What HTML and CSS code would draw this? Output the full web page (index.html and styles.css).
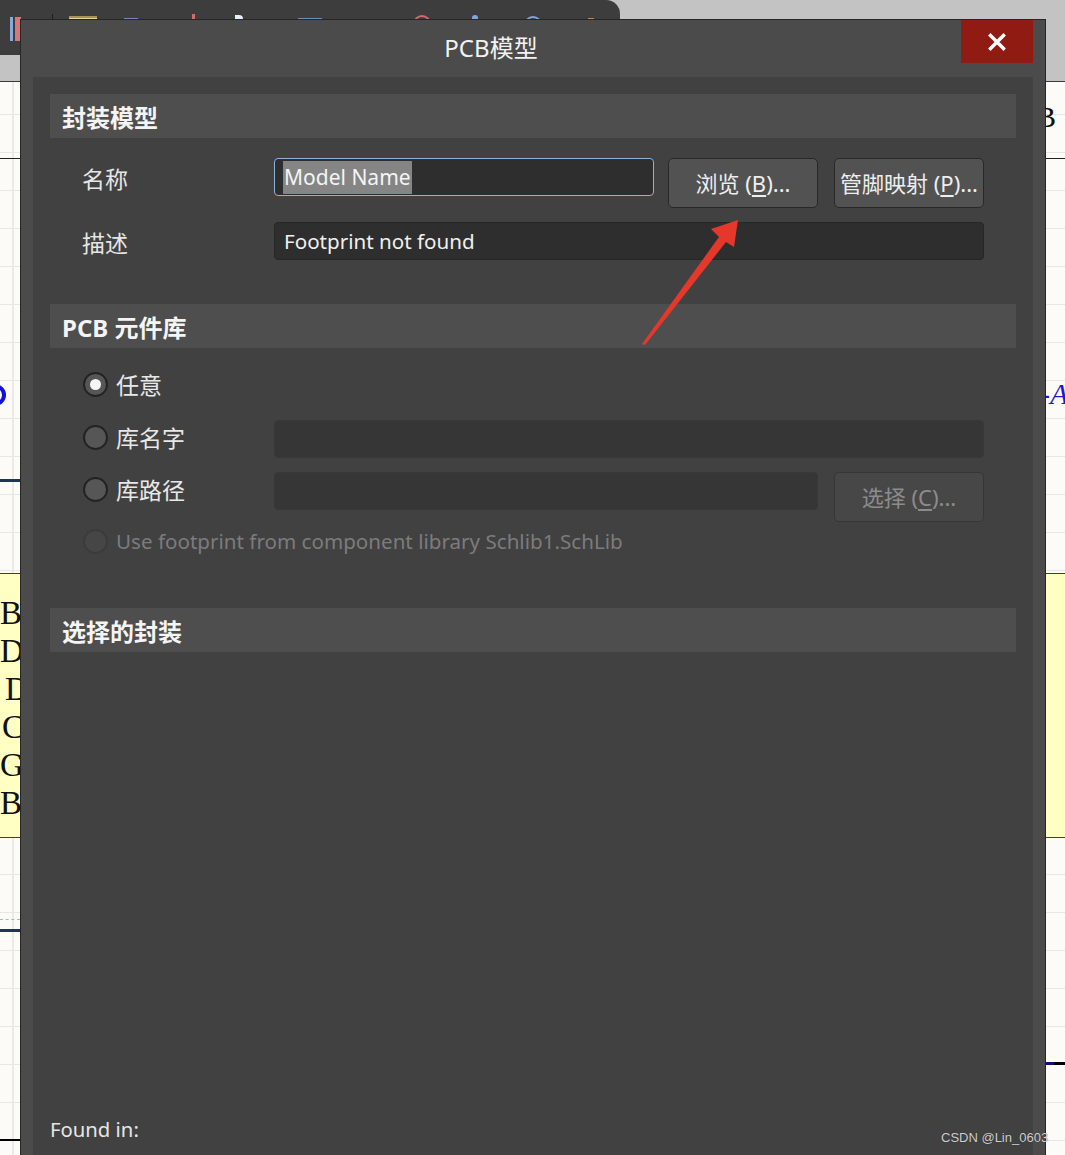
FILE: index.html
```html
<!DOCTYPE html>
<html lang="zh-CN">
<head>
  <meta charset="UTF-8">
  <title>PCB模型</title>
  <link rel="stylesheet" href="styles.css">
</head>
<body>
  <div class="desktop">
    <div class="topband">
      <div class="toolbar">
        <span class="tb-icon tb-layers"></span>
        <span class="tb-sep"></span>
        <span class="tb-icon tb-folder"></span>
        <span class="tb-icon tb-bar"></span>
        <span class="tb-icon tb-pin"></span>
        <span class="tb-icon tb-doc"></span>
        <span class="tb-icon tb-wide"></span>
        <span class="tb-icon tb-arc"></span>
        <span class="tb-icon tb-tri"></span>
        <span class="tb-icon tb-arc-blue"></span>
        <span class="tb-icon tb-dot"></span>
      </div>
    </div>

    <!-- schematic fragments visible around the dialog -->
    <div class="sch sch-line-top"></div>
    <div class="sch sch-ring"></div>
    <div class="sch sch-bus"></div>
    <div class="sch sch-glyph">B</div>
    <div class="sch sch-net">-A</div>
    <div class="sch sch-part">
      <div class="pin-names">
        <span>B</span>
        <span>D</span>
        <span class="indent">D</span>
        <span class="indent-s">C</span>
        <span>G</span>
        <span>B</span>
      </div>
    </div>
    <div class="sch sch-dots"></div>
    <div class="sch sch-wire"></div>
    <div class="sch sch-wire-r"></div>
    <div class="sch sch-wire-low"></div>

    <div class="dialog">
      <div class="titlebar">
        <div class="title">PCB模型</div>
        <button class="close" aria-label="关闭">
          <svg width="18" height="18" viewBox="0 0 18 18"><path d="M2.5 2.5 L15.5 15.5 M15.5 2.5 L2.5 15.5" stroke="#fff" stroke-width="3.4" stroke-linecap="square"/></svg>
        </button>
      </div>

      <div class="panel">
        <div class="section-head">封装模型</div>
        <div class="fields">
          <div class="row">
            <div class="label">名称</div>
            <div class="input focused name-input"><span class="sel">Model Name</span></div>
            <button class="btn">浏览 (<u>B</u>)...</button>
            <button class="btn">管脚映射 (<u>P</u>)...</button>
          </div>
          <div class="row gap-desc">
            <div class="label">描述</div>
            <div class="input wide">Footprint not found</div>
          </div>
        </div>

        <div class="section-head">PCB 元件库</div>
        <div class="fields radios">
          <div class="row">
            <label class="radio-label first"><span class="radio checked"></span>任意</label>
          </div>
          <div class="row gap-lib">
            <label class="radio-label"><span class="radio"></span>库名字</label>
            <div class="input wide disabled"></div>
          </div>
          <div class="row gap-path">
            <label class="radio-label"><span class="radio"></span>库路径</label>
            <div class="input path-input disabled"></div>
            <button class="btn disabled">选择 (<u>C</u>)...</button>
          </div>
          <div class="row">
            <label class="radio-label off"><span class="radio disabled"></span>Use footprint from component library Schlib1.SchLib</label>
          </div>
        </div>

        <div class="section-head">选择的封装</div>
        <div class="preview"></div>
        <div class="found">Found in:</div>
      </div>
    </div>

    <svg class="annot" width="1065" height="1155" viewBox="0 0 1065 1155">
      <polygon points="642,344 719,237 711,229 738,220 734,247 726,242 645,345" fill="#e5382a"/>
    </svg>

    <div class="watermark">CSDN @Lin_0603</div>
  </div>
</body>
</html>
```

FILE: styles.css
```css
* {
  margin: 0;
  padding: 0;
  box-sizing: border-box;
}

body {
  width: 1065px;
  height: 1155px;
  overflow: hidden;
  font-family: "Noto Sans", "Noto Sans CJK SC", sans-serif;
  font-size: 20px;
  color: #ececec;
}

.desktop {
  position: relative;
  width: 1065px;
  height: 1155px;
  overflow: hidden;
  background-color: #fcfbf7;
  background-image:
    repeating-linear-gradient(to bottom, transparent 0 37px, #e8e7e2 37px 38px),
    repeating-linear-gradient(to right, #ebeae6 0 1px, transparent 1px 38px);
  background-position: 0 1px, 13px 0;
}

/* top application chrome */
.topband {
  height: 82px;
  background: #c3c3c3;
  border-bottom: 1px solid #3a3a3a;
}

.toolbar {
  width: 620px;
  height: 55px;
  background: #3d3d3d;
  border-top-right-radius: 14px;
  display: flex;
  align-items: flex-start;
  padding: 14px 0 0 10px;
}

.tb-icon {
  display: block;
  height: 10px;
}

.tb-layers {
  width: 11px;
  height: 24px;
  margin-top: 3px;
  background: linear-gradient(to right, #8aa9d8 0 3px, transparent 3px 5px, #d77878 5px);
}

.tb-sep {
  width: 1px;
  height: 8px;
  margin: 0 0 0 31px;
  background: #1e1e1e;
}

.tb-folder { width: 28px; margin-left: 16px; margin-top: 2px; background: #e3d29a; border-top: 2px solid #a49355; }
.tb-bar { width: 14px; margin-left: 27px; margin-top: 4px; background: #6d8fbf; }
.tb-pin { width: 3px; margin-left: 54px; background: #d26c6c; }
.tb-doc { width: 8px; margin-left: 40px; margin-top: 1px; background: #e8eefb; border-top-right-radius: 4px; }
.tb-wide { width: 24px; margin-left: 55px; margin-top: 4px; background: #6d8fbf; }
.tb-arc { width: 18px; margin-left: 91px; margin-top: 1px; border: 2px solid #d46a6a; border-bottom: none; border-radius: 9px 9px 0 0; }
.tb-tri { width: 6px; margin-left: 41px; margin-top: 1px; background: #7fa6dc; border-radius: 3px 3px 0 0; }
.tb-arc-blue { width: 18px; margin-left: 46px; margin-top: 2px; border: 2px solid #7fa6dc; border-bottom: none; border-radius: 9px 9px 0 0; }
.tb-dot { width: 6px; margin-left: 46px; margin-top: 4px; background: #c9874b; }

/* schematic canvas fragments */
.sch {
  position: absolute;
}

.sch-line-top {
  left: 0;
  top: 158px;
  width: 1065px;
  height: 1px;
  background: #202020;
}

.sch-ring {
  left: -16px;
  top: 384px;
  width: 22px;
  height: 22px;
  border: 4px solid #1010e0;
  border-radius: 50%;
}

.sch-bus {
  left: 0;
  top: 479px;
  width: 20px;
  height: 3px;
  background: #1f3458;
}

.sch-glyph {
  left: 1036px;
  top: 100px;
  font-family: "Liberation Serif", serif;
  font-size: 30px;
  color: #111;
}

.sch-net {
  left: 1040px;
  top: 377px;
  font-family: "Liberation Serif", serif;
  font-style: italic;
  font-size: 30px;
  color: #1a1ac8;
  white-space: nowrap;
}

.sch-part {
  left: -20px;
  top: 573px;
  width: 1105px;
  height: 265px;
  background: #ffffc4;
  border-top: 1px solid #7a2a10;
  border-bottom: 1px solid #7a2a10;
}

.pin-names {
  width: 40px;
  display: flex;
  flex-direction: column;
  padding: 20px 0 0 20px;
  font-family: "Liberation Serif", serif;
  font-size: 33px;
  line-height: 38px;
  color: #111;
  white-space: nowrap;
}

.pin-names span {
  display: block;
  width: 20px;
  overflow: hidden;
}

.pin-names .indent { padding-left: 5px; }
.pin-names .indent-s { padding-left: 2px; }

.sch-dots {
  left: 0;
  top: 919px;
  width: 20px;
  border-top: 1px dashed #8fd08f;
}

.sch-wire {
  left: 0;
  top: 929px;
  width: 20px;
  height: 3px;
  background: #1f3458;
}

.sch-wire-r {
  left: 1046px;
  top: 1062px;
  width: 20px;
  height: 3px;
  background: linear-gradient(to right, #101080 0 8px, #000 8px);
}

.sch-wire-low {
  left: 0;
  top: 1139px;
  width: 20px;
  height: 2px;
  background: #000;
}

/* dialog */
.dialog {
  position: absolute;
  left: 20px;
  top: 19px;
  width: 1026px;
  height: 1150px;
  background: #4b4b4b;
  border: 1px solid #262626;
  display: flex;
  flex-direction: column;
}

.titlebar {
  height: 57px;
  display: flex;
  align-items: flex-start;
}

.title {
  flex: 1;
  text-align: center;
  line-height: 56px;
  font-size: 24px;
  color: #f2f2f2;
}

.close {
  width: 72px;
  height: 43px;
  margin-right: 12px;
  border: none;
  background: #8f1b13;
  display: flex;
  align-items: center;
  justify-content: center;
}

.panel {
  flex: 1;
  margin: 0 12px;
  padding: 17px 17px 0;
  background: #414141;
}

.section-head {
  height: 44px;
  padding-left: 12px;
  display: flex;
  align-items: center;
  background: #4e4e4e;
  font-size: 24px;
  font-weight: bold;
  color: #f4f4f4;
}

.fields {
  padding: 20px 0 44px 32px;
}

.row {
  display: flex;
  align-items: flex-start;
}

.gap-desc { margin-top: 14px; }

.label {
  width: 192px;
  height: 38px;
  line-height: 42px;
  font-size: 23px;
  color: #e6e6e6;
}

.input {
  height: 38px;
  padding-left: 9px;
  line-height: 36px;
  background: #2e2e2e;
  border: 1px solid #262626;
  border-radius: 4px;
  color: #f0f0f0;
  font-size: 20.6px;
  white-space: nowrap;
}

.input.focused {
  border-color: #8fb2d8;
}

.name-input {
  width: 380px;
  padding-left: 8px;
  font-size: 21px;
}

.sel {
  background: #858585;
  padding: 2px 1px 3px;
  color: #f4f4f4;
}

.input.wide {
  width: 710px;
}

.path-input {
  width: 544px;
}

.input.disabled {
  background: #363636;
  border-color: #383838;
}

.btn {
  width: 150px;
  height: 50px;
  margin-left: 16px;
  background: #525252;
  border: 1px solid #282828;
  border-radius: 5px;
  font-family: inherit;
  font-size: 22px;
  color: #eeeeee;
  padding-bottom: 2px;
}

.name-input + .btn {
  margin-left: 14px;
}

.btn u {
  text-underline-offset: 3px;
}

.btn.disabled {
  background: #474747;
  border-color: #363636;
  color: #8c8c8c;
}

/* radio group */
.radios {
  padding-top: 17px;
  padding-bottom: 48px;
}

.gap-lib { margin-top: 17px; }
.gap-path { margin-top: 14px; }

.radio-label {
  width: 192px;
  height: 38px;
  padding-bottom: 4px;
  display: flex;
  align-items: center;
  font-size: 23px;
  color: #e8e8e8;
  white-space: nowrap;
}

.radio-label.first {
  padding-bottom: 0;
}

.radio-label.off {
  width: auto;
  padding-bottom: 0;
  font-size: 20.6px;
  color: #7c7c7c;
}

.radio {
  flex-shrink: 0;
  width: 25px;
  height: 25px;
  margin: 0 8px 0 1px;
  border: 2px solid #232323;
  border-radius: 50%;
  background: #565656;
  display: flex;
  align-items: center;
  justify-content: center;
}

.radio.checked::after {
  content: "";
  width: 11px;
  height: 11px;
  border-radius: 50%;
  background: #f6f6f6;
}

.radio.disabled {
  border-color: #3b3b3b;
  background: #464646;
}

.preview {
  height: 458px;
}

.found {
  line-height: 38px;
  font-size: 20.3px;
  color: #e6e6e6;
}

/* overlays */
.annot {
  position: absolute;
  left: 0;
  top: 0;
  pointer-events: none;
}

.watermark {
  position: absolute;
  left: 941px;
  top: 1129px;
  font-family: "Liberation Sans", Arial, sans-serif;
  font-size: 13px;
  line-height: 18px;
  color: #cfcfcf;
  text-shadow: 0 0 1px rgba(0, 0, 0, 0.4);
}
```
